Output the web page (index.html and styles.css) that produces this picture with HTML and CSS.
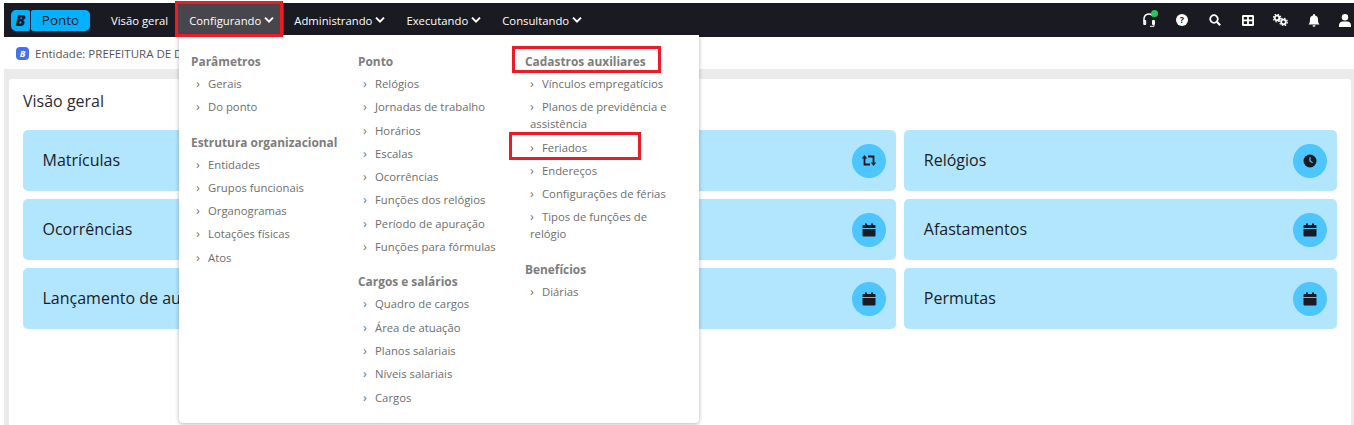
FILE: index.html
```html
<!DOCTYPE html>
<html lang="pt-BR">
<head>
<meta charset="utf-8">
<title>Ponto</title>
<link rel="stylesheet" href="styles.css">
</head>
<body>
<div class="app">
  <svg class="defs" width="0" height="0" aria-hidden="true">
    <symbol id="chev" viewBox="0 0 10 8"><path d="M1 1.600 5 5.600l4-4" fill="none" stroke="currentColor" stroke-width="2"/></symbol>
    <symbol id="cal" viewBox="0 0 14 14"><path d="M3 .5h2v1.500h4V.5h2V2h1.500A1 1 0 0 1 13.500 3v2H.5V3a1 1 0 0 1 1-1H3zM.5 6h13v6.500a1 1 0 0 1-1 1h-11a1 1 0 0 1-1-1z" fill="currentColor"/></symbol>
  </svg>
  <header class="topbar">
    <div class="brand">
      <span class="brand-b">B</span><span class="brand-name">Ponto</span>
    </div>
    <nav class="nav">
      <a class="nav-item">Visão geral</a>
      <a class="nav-item active">Configurando <svg class="chev"><use href="#chev"/></svg></a>
      <a class="nav-item">Administrando <svg class="chev"><use href="#chev"/></svg></a>
      <a class="nav-item">Executando <svg class="chev"><use href="#chev"/></svg></a>
      <a class="nav-item">Consultando <svg class="chev"><use href="#chev"/></svg></a>
    </nav>
    <div class="tools">
      <span class="tool head">
        <svg viewBox="0 0 12 14" width="12" height="14"><path d="M1 8V6a5 5 0 0 1 9-3" fill="none" stroke="#fff" stroke-width="1.500"/><rect x=".2" y="7" width="3" height="5" rx="1" fill="#fff"/><rect x="9" y="7" width="3" height="5" rx="1" fill="#fff"/><path d="M11 12v1.300H7" fill="none" stroke="#fff" stroke-width="1"/></svg>
        <i class="online"></i>
      </span>
      <span class="tool"><svg viewBox="0 0 12 12" width="12" height="12"><circle cx="6" cy="6" r="6" fill="#fff"/><text x="6" y="9" text-anchor="middle" class="q">?</text></svg></span>
      <span class="tool"><svg viewBox="0 0 12 12" width="12" height="12"><circle cx="5" cy="5" r="3.800" fill="none" stroke="#fff" stroke-width="1.800"/><path d="m8 8 3.200 3.200" stroke="#fff" stroke-width="2.100"/></svg></span>
      <span class="tool"><svg viewBox="0 0 12 11" width="12" height="11"><path fill="#fff" fill-rule="evenodd" d="M1.200 0h9.600A1.200 1.200 0 0 1 12 1.200v8.600A1.200 1.200 0 0 1 10.800 11H1.200A1.200 1.200 0 0 1 0 9.800V1.200A1.200 1.200 0 0 1 1.200 0zM1.800 2v2.500h3.300V2zm5.100 0v2.500h3.300V2zM1.800 6.300v2.800h3.300V6.300zm5.100 0v2.800h3.300V6.300z"/></svg></span>
      <span class="tool"><svg viewBox="0 0 15 12" width="15" height="12"><circle cx="4" cy="4" r="2.300" fill="none" stroke="#fff" stroke-width="1.800"/><circle cx="4" cy="4" r="3.800" fill="none" stroke="#fff" stroke-width="1.200" stroke-dasharray="1.500 1.500"/><circle cx="10.500" cy="8" r="2.300" fill="none" stroke="#fff" stroke-width="1.800"/><circle cx="10.500" cy="8" r="3.800" fill="none" stroke="#fff" stroke-width="1.200" stroke-dasharray="1.500 1.500"/></svg></span>
      <span class="tool"><svg viewBox="0 0 12 13" width="12" height="13"><path fill="#fff" d="M6 0a1 1 0 0 1 1 1v.6A4 4 0 0 1 10 5.500c0 3 .6 3.900 1.600 5H.4c1-1.100 1.600-2 1.600-5A4 4 0 0 1 5 1.600V1a1 1 0 0 1 1-1zM4.500 11.300h3a1.500 1.500 0 0 1-3 0z"/></svg></span>
      <span class="tool"><svg viewBox="0 0 12 13" width="12" height="13"><circle cx="6" cy="3.200" r="3.200" fill="#fff"/><path fill="#fff" d="M0 13v-2a4 4 0 0 1 4-3.500h4A4 4 0 0 1 12 11v2z"/></svg></span>
    </div>
  </header>

  <div class="entity">
    <span class="entity-logo">B</span>
    <span>Entidade: PREFEITURA DE DEMONSTRAÇÃO</span>
  </div>

  <main class="content">
    <section class="card">
      <h1 class="card-title">Visão geral</h1>
      <div class="tiles">
        <a class="tile"><span>Matrículas</span></a>
        <a class="tile"><span>Apurações</span>
          <i class="tile-icon"><svg viewBox="0 0 16 13" width="16" height="13"><path d="M3.500 3V10.500H9M7 2.500h5.500V10" fill="none" stroke="currentColor" stroke-width="1.800"/><path d="M.8 4.400 3.500 1l2.700 3.400zM9.800 8.600 12.500 12l2.700-3.400z" fill="currentColor"/></svg></i></a>
        <a class="tile"><span>Relógios</span>
          <i class="tile-icon"><svg viewBox="0 0 14 14" width="14" height="14"><circle cx="7" cy="7" r="6.500" fill="currentColor"/><path d="M7 3.200V7l2.600 1.700" fill="none" stroke="#4dc5ff" stroke-width="1.300"/></svg></i></a>
        <a class="tile"><span>Ocorrências</span></a>
        <a class="tile"><span>Horas extras</span>
          <i class="tile-icon"><svg width="14" height="14"><use href="#cal"/></svg></i></a>
        <a class="tile"><span>Afastamentos</span>
          <i class="tile-icon"><svg width="14" height="14"><use href="#cal"/></svg></i></a>
        <a class="tile"><span>Lançamento de autorizações</span></a>
        <a class="tile"><span>Compensações</span>
          <i class="tile-icon"><svg width="14" height="14"><use href="#cal"/></svg></i></a>
        <a class="tile"><span>Permutas</span>
          <i class="tile-icon"><svg width="14" height="14"><use href="#cal"/></svg></i></a>
      </div>
    </section>
  </main>

  <div class="menu">
    <div class="menu-col">
      <h2>Parâmetros</h2>
      <ul>
        <li>Gerais</li>
        <li>Do ponto</li>
      </ul>
      <h2>Estrutura organizacional</h2>
      <ul>
        <li>Entidades</li>
        <li>Grupos funcionais</li>
        <li>Organogramas</li>
        <li>Lotações físicas</li>
        <li>Atos</li>
      </ul>
    </div>
    <div class="menu-col">
      <h2>Ponto</h2>
      <ul>
        <li>Relógios</li>
        <li>Jornadas de trabalho</li>
        <li>Horários</li>
        <li>Escalas</li>
        <li>Ocorrências</li>
        <li>Funções dos relógios</li>
        <li>Período de apuração</li>
        <li>Funções para fórmulas</li>
      </ul>
      <h2>Cargos e salários</h2>
      <ul>
        <li>Quadro de cargos</li>
        <li>Área de atuação</li>
        <li>Planos salariais</li>
        <li>Níveis salariais</li>
        <li>Cargos</li>
      </ul>
    </div>
    <div class="menu-col">
      <h2>Cadastros auxiliares</h2>
      <ul>
        <li>Vínculos empregatícios</li>
        <li>Planos de previdência e assistência</li>
        <li>Feriados</li>
        <li>Endereços</li>
        <li>Configurações de férias</li>
        <li>Tipos de funções de relógio</li>
      </ul>
      <h2>Benefícios</h2>
      <ul>
        <li>Diárias</li>
      </ul>
    </div>
  </div>

  <i class="mark mark-nav"></i>
  <i class="mark mark-head"></i>
  <i class="mark mark-item"></i>
</div>
</body>
</html>
```
FILE: styles.css
```css
* { box-sizing: border-box; }
html, body { margin: 0; height: 100%; overflow: hidden; background: #fff; }
body { font-family: "Open Sans", "Liberation Sans", sans-serif; color: #1c1b22; }
.app { position: relative; height: 425px; padding: 3px 0 0 4px; }
.defs { position: absolute; }

.topbar { display: flex; align-items: center; height: 34px; background: #1a1a22; color: #fff; padding-left: 7px; }
.brand { display: flex; gap: 1px; width: 97px; flex: none; }
.brand-b { width: 19px; height: 21px; background: #04b1ff; border-radius: 5px 2px 2px 5px; color: #1a1a22; font: italic 800 16px/21px "Open Sans", sans-serif; text-align: center; }
.brand-name { width: 59px; height: 21px; background: #04b1ff; border-radius: 2px 5px 5px 2px; color: #1a1a22; font-size: 13.500px; line-height: 21px; text-align: center; }
.nav { display: flex; height: 100%; }
.nav-item { display: flex; align-items: center; gap: 3px; padding: 0 10.500px; font-size: 11.300px; font-weight: 500; white-space: nowrap; }
.nav-item:first-child { padding: 0 10px 0 3px; }
.nav-item.active { background: #46464c; padding: 0 9.500px 0 11px; }
.chev { width: 10px; height: 8px; flex: none; }
.tools { margin-left: auto; display: flex; align-items: center; height: 100%; }
.tool { position: relative; display: flex; justify-content: center; align-items: center; width: 33px; height: 100%; }
.tool:last-child { width: 18px; margin-left: 6px; }
.online { position: absolute; left: 18.500px; top: 7px; width: 7px; height: 7px; border-radius: 50%; background: #1fc75c; }
.q { font: 700 9px "Open Sans", sans-serif; fill: #1a1a22; }

.entity { display: flex; align-items: center; gap: 6px; height: 32px; padding-left: 12px; font-size: 11.500px; color: #555; white-space: nowrap; }
.entity-logo { width: 13px; height: 13px; border-radius: 4px; background: #4271f5; color: #fff; font: italic 700 9px/13px "Open Sans", sans-serif; text-align: center; }

.content { background: #ebebeb; height: 356px; padding: 10px 3px 0 5px; }
.card { background: #fff; height: 100%; border-radius: 3px 3px 0 0; padding: 12px 14px 0; }
.card-title { margin: 0 0 18px; height: 21px; font-size: 16px; font-weight: 400; line-height: 21px; color: #2b2b33; }
.tiles { display: grid; grid-template-columns: repeat(3, 1fr); gap: 8px; grid-auto-rows: 61px; }
.tile { display: flex; align-items: center; justify-content: space-between; padding: 0 10px 0 19.500px; background: #b2e6ff; border-radius: 5px; font-size: 16px; }
.tile span { padding-bottom: 2px; }
.tile-icon { display: flex; align-items: center; justify-content: center; width: 34px; height: 34px; border-radius: 50%; background: #4dc5ff; color: #1a1a22; }

.menu { position: absolute; left: 179px; top: 35px; width: 520px; height: 388px; display: flex; padding: 0 0 0 12px; background: #fff; border-radius: 0 0 4px 4px; box-shadow: 0 1px 4px rgba(0, 0, 0, .3); color: #6e6e6e; }
.menu-col { width: 167px; padding-top: 16px; }
.menu-col h2 { margin: 0; font-size: 11.900px; font-weight: 700; line-height: 20px; color: #7d7d7d; white-space: nowrap; }
.menu-col ul { list-style: none; margin: 1px 0 13px; padding: 0; width: 146px; }
.menu-col li { padding: 3px 0 3.300px 5px; font-size: 11.300px; line-height: 17px; }
.menu-col li::before { content: "›"; display: inline-block; width: 12px; font-size: 13px; line-height: 13px; color: #777; }

.mark { position: absolute; display: block; border: 3px solid #ed1c24; }
.mark-nav { left: 175px; top: 1px; width: 108px; height: 36px; }
.mark-head { left: 512px; top: 46px; width: 149px; height: 27px; }
.mark-item { left: 509px; top: 132px; width: 132px; height: 28px; }
```
